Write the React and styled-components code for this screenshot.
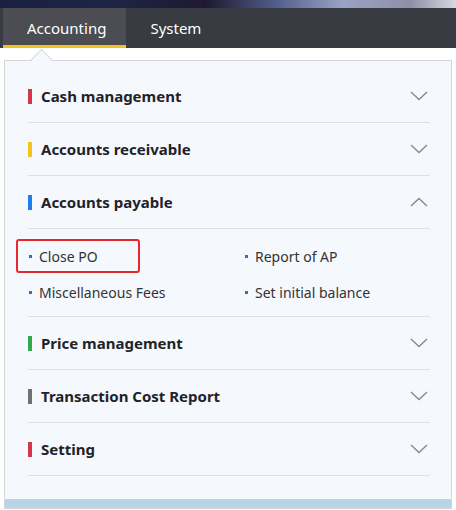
import React from "react";
import styled, { createGlobalStyle } from "styled-components";

const GlobalStyle = createGlobalStyle`
  html, body {
    margin: 0;
    padding: 0;
    background: #ffffff;
    font-family: "Noto Sans", "Open Sans", sans-serif;
  }
`;

const sections = [
  { title: "Cash management", color: "#d63447" },
  { title: "Accounts receivable", color: "#f8c21c" },
  {
    title: "Accounts payable",
    color: "#1e7ef0",
    open: true,
    items: ["Close PO", "Report of AP", "Miscellaneous Fees", "Set initial balance"],
  },
  { title: "Price management", color: "#2eab4f" },
  { title: "Transaction Cost Report", color: "#6f7177" },
  { title: "Setting", color: "#d63447" },
];

function Chevron({ up }) {
  return (
    <svg width="18" height="10" viewBox="0 0 18 10">
      <polyline
        points={up ? "1,9 9,1.5 17,9" : "1,1 9,8.5 17,1"}
        fill="none"
        stroke="#84878d"
        strokeWidth="1.3"
      />
    </svg>
  );
}

function App() {
  return (
    <Page>
      <GlobalStyle />
      <TopStrip />
      <NavBar>
        <Tab active>Accounting</Tab>
        <Tab>System</Tab>
      </NavBar>
      <Dropdown>
        <Caret />
        {sections.map((s) => (
          <Section key={s.title}>
            <Header>
              <Bar color={s.color} />
              <Title>{s.title}</Title>
              <Chevron up={s.open} />
            </Header>
            {s.items && (
              <SubList>
                {s.items.map((item, i) => (
                  <SubItem key={item}>
                    {item}
                    {i === 0 && <Highlight />}
                  </SubItem>
                ))}
              </SubList>
            )}
          </Section>
        ))}
        <BottomStrip />
      </Dropdown>
    </Page>
  );
}

export default App;

const Page = styled.div`
  width: 456px;
  height: 510px;
  overflow: hidden;
  background: #fff;
`;

const TopStrip = styled.div`
  height: 8px;
  background: linear-gradient(
    90deg,
    #1a2140 0%,
    #1d2544 25%,
    #1f1830 45%,
    #4f5b88 60%,
    #9aa3c4 75%,
    #8f8fa8 90%,
    #d8d8e0 100%
  );
`;

const NavBar = styled.div`
  height: 40px;
  background: #383b41;
  display: flex;
  padding-left: 3px;
`;

const Tab = styled.div`
  box-sizing: border-box;
  height: 40px;
  padding: 3px 20px 0 24px;
  display: flex;
  align-items: center;
  font-size: 15px;
  color: #ffffff;
  background: ${(p) => (p.active ? "#4b4d52" : "transparent")};
  border-bottom: 3px solid ${(p) => (p.active ? "#f5c21c" : "transparent")};
`;

const Dropdown = styled.div`
  position: relative;
  box-sizing: border-box;
  margin: 12px 0 0 4px;
  width: 448px;
  background: #f5f8fd;
  border: 1px solid #d3d6db;
  padding: 9px 21px 0 23px;
`;

const Caret = styled.div`
  position: absolute;
  top: -9px;
  left: 29px;
  width: 14px;
  height: 14px;
  background: #f5f8fd;
  border-left: 1px solid #d3d6db;
  border-top: 1px solid #d3d6db;
  transform: rotate(45deg);
`;

const Section = styled.div`
  border-bottom: 1px solid #dcdfe4;
`;

const Header = styled.div`
  height: 52px;
  display: flex;
  align-items: center;
  padding-right: 2px;
  & + div {
    border-top: 1px solid #dcdfe4;
  }
`;

const Bar = styled.span`
  width: 4px;
  height: 15px;
  background: ${(p) => p.color};
  margin-right: 9px;
`;

const Title = styled.span`
  flex: 1;
  font-size: 15px;
  font-weight: 700;
  color: #1f2329;
`;

const SubList = styled.div`
  display: grid;
  grid-template-columns: 216px 1fr;
  padding: 9px 0 6px;
`;

const SubItem = styled.div`
  position: relative;
  height: 36px;
  display: flex;
  align-items: center;
  font-size: 14px;
  color: #333;
  padding-left: 11px;

  &::before {
    content: "";
    position: absolute;
    left: 1px;
    top: 17px;
    width: 3px;
    height: 3px;
    background: #2f6fbd;
  }
`;

const Highlight = styled.span`
  position: absolute;
  left: -12px;
  top: 1px;
  width: 120px;
  height: 30px;
  border: 2px solid #e5282a;
  border-radius: 3px;
`;

const BottomStrip = styled.div`
  height: 9px;
  background: #b8d5e6;
  margin: 23px -21px 0 -23px;
`;
